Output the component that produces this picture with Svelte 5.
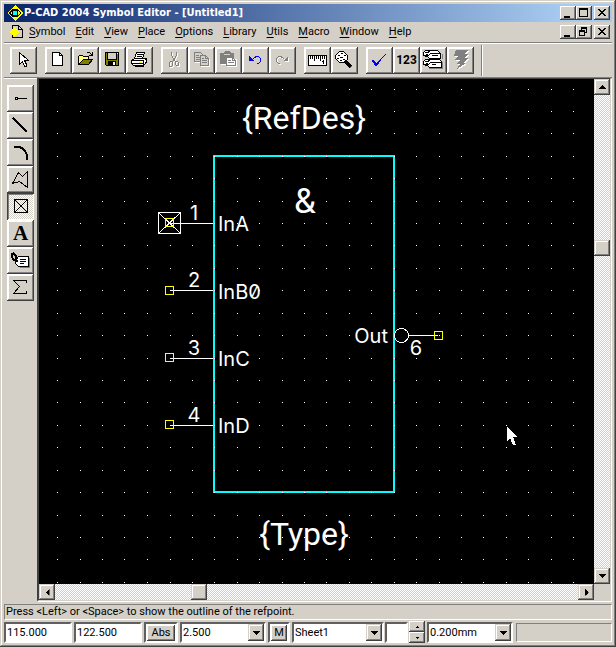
<script>
  const menus = [
    ['S', 'ymbol'], ['E', 'dit'], ['V', 'iew'], ['P', 'lace'], ['O', 'ptions'],
    ['L', 'ibrary'], ['U', 'tils'], ['M', 'acro'], ['W', 'indow'], ['H', 'elp']
  ];

  const toolGroups = [
    ['Select'],
    ['New', 'Open', 'Save', 'Print'],
    ['Cut', 'Copy', 'Paste', 'Undo', 'Redo'],
    ['Measure', 'Zoom'],
    ['Validate', 'Renumber', 'Attributes', 'Run']
  ];

  const placeTools = ['Pin', 'Line', 'Arc', 'Polygon', 'Ref point', 'Text', 'Attribute', 'Formula'];
  let activeTool = $state('Ref point');

  const gridX = [57, 80, 102, 124, 147, 170, 192, 214, 237, 259, 282, 304, 326, 349, 371, 394, 416, 439, 461, 483, 506, 528, 551, 573];
  const gridY = [89, 111, 133, 156, 178, 201, 223, 245, 268, 290, 313, 335, 358, 380, 402, 425, 447, 470, 492, 515, 537, 559, 582];
  const gridPath = gridY.map((y) => gridX.map((x) => `M${x} ${y}h1v1h-1z`).join('')).join('');

  const pins = [
    { num: '1', name: 'InA', y: 223, box: 218, base: 231, numBase: 220 },
    { num: '2', name: 'InB0', y: 290, box: 286, base: 299, numBase: 287 },
    { num: '3', name: 'InC', y: 358, box: 353, base: 366, numBase: 355 },
    { num: '4', name: 'InD', y: 425, box: 420, base: 433, numBase: 422 }
  ];

  let xPos = $state('115.000');
  let yPos = $state('122.500');
</script>

{#snippet toolIcon(name)}
  <svg class="icon" viewBox="0 0 27 27" width="27" height="27" aria-hidden="true">
    {#if name === 'Select'}
      <path d="M9.5 5.5V17.5L12.5 14.5L14.5 19.5H16.5V17.5L14.5 13.5H18.5Z" fill="#fff" stroke="#000" />
    {:else if name === 'New'}
      <path d="M7.5 5.5H14.5L17.5 8.5V18.5H7.5Z" fill="#fff" stroke="#000" />
      <path d="M14.5 5.5V8.5H17.5" fill="none" stroke="#000" />
    {:else if name === 'Open'}
      <path d="M6.5 17.5V9.5L7.5 8.5H10.5L11.5 9.5H16.5V12.5H11.5Z" fill="#ffff80" stroke="#000" />
      <path d="M6.5 17.5L11.5 12.5H20.5L16.5 17.5Z" fill="#808000" stroke="#000" />
      <path d="M14.5 6.5L15.5 5.5H17.5L20.5 8.5M20.5 5V8.5H17" fill="none" stroke="#000" />
    {:else if name === 'Save'}
      <path d="M6.5 5.5H19.5V18.5H7.5L6.5 17.5Z" fill="#808000" stroke="#000" />
      <path d="M9 6H17V12H9Z" fill="#d4d0c8" /><path d="M8.5 5V12.5H17.5V5" fill="none" stroke="#000" />
      <path d="M9 14H17V18H9Z" fill="#000" /><path d="M14 15H16V18H14Z" fill="#fff" />
      <path d="M18 6H19V7H18Z" fill="#fff" />
    {:else if name === 'Print'}
      <path d="M8.5 11.5L10.5 5.5H18.5L16.5 11.5Z" fill="#fff" stroke="#000" />
      <path d="M11 7.5H17M10.5 9.5H16" stroke="#000" />
      <path d="M5.5 13.5L8.5 11.5H19.5L20.5 12.5V15.5L17.5 18.5H7.5L5.5 16.5Z" fill="#fff" stroke="#000" />
      <path d="M6 13.5H17.5V18M18.5 13.5L20.5 11.5M6 16.5H17M18.5 16.5L20.5 14.5" fill="none" stroke="#000" />
      <path d="M13 15H16V16H13Z" fill="#ff0" />
      <path d="M8.5 18.5H17.5" stroke="#000" stroke-width="2" />
    {:else if name === 'Cut'}
      {#each ['#fff', '#808080'] as tone, i}
        <g fill="none" stroke={tone} transform={i ? '' : 'translate(1 1)'}>
          <path d="M10.5 5V8.5L14.5 15M15.5 5V8.5L11.5 15" />
          <path d="M9.5 14.5H11.5V18.5L10.5 19.5H8.5V15.5ZM14.5 14.5H16.5L17.5 15.5V18.5H15.5L14.5 17.5Z" />
        </g>
      {/each}
    {:else if name === 'Copy'}
      {#each ['#fff', '#808080'] as tone, i}
        <g fill="none" stroke={tone} transform={i ? '' : 'translate(1 1)'}>
          <path d="M6.5 5.5H12.5L14.5 7.5V14.5H6.5Z" fill="#d4d0c8" />
          <path d="M8 8.5H11M8 10.5H12M8 12.5H12" />
          <path d="M12.5 8.5H17.5L20.5 11.5V18.5H12.5Z" fill="#d4d0c8" />
          <path d="M17.5 9V11.5H20M14 11.5H16M14 13.5H19M14 15.5H19" />
        </g>
      {/each}
    {:else if name === 'Paste'}
      <path d="M6 7H19V12H22V20H12V18H6Z" fill="#fff" />
      <path d="M5 6H8L10 4H14L16 6H19V17H5Z" fill="#808080" />
      <path d="M9 7.5H15" stroke="#d4d0c8" />
      <path d="M11.5 10.5H17.5L20.5 13.5V18.5H11.5Z" fill="#fff" stroke="#808080" />
      <path d="M17.5 11V13.5H20M13 13.5H16M13 15.5H19" fill="none" stroke="#808080" />
    {:else if name === 'Undo'}
      <path d="M7 9H8V10H9V11H10V12H11V13H12V14H7Z" fill="#00f" />
      <path d="M10.5 12.5L12.5 10.5L14.5 9.5H16.5L18.5 11.5V14.5L16.5 16.5H15" fill="none" stroke="#00f" />
    {:else if name === 'Redo'}
      <g transform="translate(1 1)">
        <path d="M19 9V14H14Z" fill="#fff" /><path d="M15.5 12.5L13.5 10.5L11.5 9.5H9.5L7.5 11.5V14.5L9.5 16.5H11" fill="none" stroke="#fff" />
      </g>
      <path d="M19 9V14H14Z" fill="#808080" /><path d="M15.5 12.5L13.5 10.5L11.5 9.5H9.5L7.5 11.5V14.5L9.5 16.5H11" fill="none" stroke="#808080" />
    {:else if name === 'Measure'}
      <path d="M4.5 8.5H22.5V18.5H4.5Z" fill="#fff" stroke="#000" />
      <path d="M6.5 9V12M8.5 9V12M10.5 9V14M12.5 9V12M14.5 9V12M16.5 9V14M18.5 9V12M20.5 9V12M19.5 13V17M18 14.5H20" stroke="#000" />
    {:else if name === 'Zoom'}
      <path d="M8.5 4.5H12.5L16.5 8.5V12.5L13.5 15.5H8.5L4.5 11.5V8.5Z" fill="#fff" stroke="#000" />
      <path d="M7 8.5H9M10 6.5H12M13 8.5H15M6 11.5H8M9 10.5H12M12 12.5H14M9 13.5H11" stroke="#000" />
      <path d="M14.5 14.5L20.5 20.5" stroke="#808080" stroke-width="4" />
      <path d="M14 14L20 20" stroke="#000" stroke-width="3" />
    {:else if name === 'Validate'}
      <path d="M6 13H8V14H9V15H10V16H11V15H12V14H13V13H14V12H15V11H16V10H17V9H18V8H19V7H20V8H19V9H18V10H17V11H16V12H15V14H14V15H13V17H12V18H11V19H9V18H8V16H7V15H6Z" fill="#00f" />
    {:else if name === 'Attributes'}
      <path d="M22.5 7V11.5M22.5 15V21.5H9" fill="none" stroke="#808080" />
      <path d="M5.5 3.5H17.5L20.5 6.5V11.5H9.5L7.5 9.5L3.5 8.5V5.5Z" fill="#fff" stroke="#000" />
      <path d="M5 5.5H8L10.5 3.5M7.5 9.5L10.5 6.5H20M12 8.5H18" fill="none" stroke="#000" />
      <path d="M5.5 12.5H19.5L21.5 14.5V20.5H9.5L7.5 18.5L3.5 17.5V14.5Z" fill="#fff" stroke="#000" />
      <path d="M5 14.5H8L10.5 12.5M7.5 18.5L10.5 15.5H21M12 17.5H16" fill="none" stroke="#000" />
      <path d="M6 7H8V9H6ZM6 16H8V18H6Z" fill="#000" />
    {:else if name === 'Run'}
      <path d="M10 4H22L18 8H22L19 12H22L17 17H20L11 23L14 18H11L14 14H8L12 10H8Z" fill="#fff" />
      <path d="M9 3H21L17 7H21L18 11H21L16 16H19L10 22L13 17H10L13 13H7L11 9H7Z" fill="#808080" />
    {:else if name === 'Pin'}
      <path d="M8.5 12.5H10.5V14.5H8.5ZM11 13.5H20" fill="none" stroke="#000" />
    {:else if name === 'Line'}
      <path d="M6 6L20 20" stroke="#000" stroke-width="2" />
    {:else if name === 'Arc'}
      <path d="M7 8H11C16 8 20 13 20 18V21" fill="none" stroke="#000" stroke-width="2" />
    {:else if name === 'Polygon'}
      <path d="M5.5 17.5L11.5 6.5L15.5 10.5L20.5 5.5V21.5L12.5 15.5Z" fill="none" stroke="#000" />
    {:else if name === 'Ref point'}
      <path d="M7.5 6.5H20.5V19.5H7.5ZM7.5 6.5L20.5 19.5M20.5 6.5L7.5 19.5" fill="none" stroke="#000" />
    {:else if name === 'Attribute'}
      <path d="M11.5 9.5H21.5V19.5H11.5L8.5 16.5V13.5Z" fill="#fff" stroke="#000" />
      <path d="M22.5 11V20.5H13" fill="none" stroke="#808080" />
      <path d="M13 12.5H19M13 14.5H19M13 16.5H17M10 14.5H11" stroke="#000" />
      <path d="M10.5 14.5L6.5 12.5L4.5 9.5V7.5L6.5 6.5L8.5 8.5L9.5 13.5" fill="none" stroke="#000" stroke-width="2" />
    {:else if name === 'Formula'}
      <path d="M19.5 9V6.5H6.5L12.5 12.5L6.5 19.5H19.5V17" fill="none" stroke="#000" />
    {/if}
  </svg>
{/snippet}

{#snippet arrow(dir)}
  <svg class="arrow {dir}" width="7" height="4" viewBox="0 0 7 4" aria-hidden="true"><path d="M0 0H7V1H6V2H5V3H4V4H3V3H2V2H1V1H0Z" /></svg>
{/snippet}

{#snippet winButtons(middle)}
  <div class="win-buttons">
    <button aria-label="Minimize"><svg width="16" height="14"><path d="M4 10H10V12H4Z" /></svg></button>
    <button aria-label={middle}>
      <svg width="16" height="14">
        {#if middle === 'Maximize'}
          <path d="M3 2H12V11H3ZM4 4V10H11V4Z" fill-rule="evenodd" />
        {:else}
          <path d="M5 2H11V8H9V7H10V4H6V5H5ZM3 5H9V11H3ZM4 7V10H8V7Z" fill-rule="evenodd" />
        {/if}
      </svg>
    </button>
    <button class="close" aria-label="Close"><svg width="16" height="14"><path d="M4 3H6V4H7V5H9V4H10V3H12V4H11V5H10V6H9V7H10V8H11V9H12V10H10V9H9V8H7V9H6V10H4V9H5V8H6V7H7V6H6V5H5V4H4Z" /></svg></button>
  </div>
{/snippet}

<div class="window">
  <header class="titlebar">
    <svg class="logo" width="18" height="18" viewBox="0 0 18 18" aria-hidden="true">
      <path d="M9 1L17 9L9 17L1 9Z" fill="#ff0" />
      <path d="M3 9L6 5H12L15 9L12 13H6Z" fill="#000" />
      <path d="M4 9L7 6H11L14 9L11 12H7Z" fill="#ff0" />
      <path d="M6 6H12V12H6Z" fill="#000" /><path d="M7 7H11V11H7Z" fill="#0ff" />
    </svg>
    <h1>P-CAD 2004 Symbol Editor - [Untitled1]</h1>
    {@render winButtons('Maximize')}
  </header>

  <nav class="menubar">
    <svg class="doc" width="20" height="16" viewBox="0 0 20 16" aria-hidden="true">
      <path d="M8.5 1.5H14.5L18.5 5.5V13.5H8.5Z" fill="#d4d0c8" stroke="#000" />
      <path d="M14.5 2V5.5H18" fill="none" stroke="#000" />
      <path d="M10 3L15 8L10 13L5 8Z" fill="#ff0" />
    </svg>
    {#each menus as [key, rest]}
      <button class="menu"><u>{key}</u>{rest}</button>
    {/each}
    {@render winButtons('Restore')}
  </nav>

  <div class="toolbar">
    {#each toolGroups as group}
      <div class="group">
        {#each group as name}
          <button class="tool" aria-label={name} title={name}>
            {#if name === 'Renumber'}<b>123</b>{:else}{@render toolIcon(name)}{/if}
          </button>
        {/each}
      </div>
    {/each}
    <span class="divider"></span>
  </div>

  <main>
    <aside>
      {#each placeTools as name}
        <button class="tool" class:active={activeTool === name} aria-label={name} aria-pressed={activeTool === name} onclick={() => (activeTool = name)}>
          {#if name === 'Text'}<span class="letter">A</span>{:else}{@render toolIcon(name)}{/if}
        </button>
      {/each}
    </aside>

    <div class="stage">
      <svg class="canvas" role="img" aria-label="Symbol drawing">
        <g transform="translate(-39 -79)">
          <rect class="body" x="214" y="156" width="180" height="336" />
          <path class="grid" d={gridPath} />
          {#each pins as pin}
            <path class="wire" d="M170 {pin.y + 0.5}H213" />
            <rect class="pad" x="165.5" y={pin.box + 0.5} width="8" height="8" />
            <text class="pin" x="194" y={pin.numBase} text-anchor="middle">{pin.num}</text>
            <text class="pin" x="218" y={pin.base}>{pin.name}</text>
          {/each}
          <path class="wire" d="M158.5 212.5H180.5V233.5H158.5ZM158.5 212.5L180.5 233.5M180.5 212.5L158.5 233.5" />
          <rect class="pad" x="165.5" y="218.5" width="8" height="8" />
          <circle class="wire" cx="401.5" cy="335.5" r="7" />
          <path class="wire" d="M409 335.5H438" />
          <rect class="pad" x="434.5" y="331.5" width="8" height="8" />
          <text class="pin" x="388" y="343" text-anchor="end">Out</text>
          <text class="pin" x="416" y="355" text-anchor="middle">6</text>
          <text class="label" x="304" y="129" text-anchor="middle">{'{RefDes}'}</text>
          <text class="label gate" x="305" y="213" text-anchor="middle">&amp;</text>
          <text class="label" x="304" y="545" text-anchor="middle">{'{Type}'}</text>
          <path d="M507 427V441L510 438L513 445H516L513 437H517Z" fill="#fff" />
        </g>
      </svg>
      <div class="scroll vertical">
        <button class="cap" aria-label="Scroll up">{@render arrow('up')}</button>
        <span class="before"></span><span class="cap"></span><span class="after"></span>
        <button class="cap" aria-label="Scroll down">{@render arrow('down')}</button>
      </div>
      <div class="scroll horizontal">
        <button class="cap" aria-label="Scroll left">{@render arrow('left')}</button>
        <span class="before"></span><span class="cap"></span><span class="after"></span>
        <button class="cap" aria-label="Scroll right">{@render arrow('right')}</button>
      </div>
    </div>
  </main>

  <p class="prompt">Press &lt;Left&gt; or &lt;Space&gt; to show the outline of the refpoint.</p>

  <footer>
    <input class="field coord" aria-label="X position" bind:value={xPos} />
    <input class="field coord" aria-label="Y position" bind:value={yPos} />
    <div class="field holder wide"><button>Abs</button></div>
    <div class="field combo">
      <select aria-label="Grid spacing"><option>2.500</option></select>
      <span class="cap">{@render arrow('down')}</span>
    </div>
    <div class="field holder"><button>M</button></div>
    <div class="field combo sheet">
      <select aria-label="Sheet"><option>Sheet1</option></select>
      <span class="cap">{@render arrow('down')}</span>
    </div>
    <div class="field swatch"></div>
    <div class="spinner">
      <button aria-label="Next sheet"><svg width="3" height="2"><path d="M1 0H2V1H3V2H0V1H1Z" /></svg></button>
      <button aria-label="Previous sheet"><svg width="3" height="2"><path d="M0 0H3V1H2V2H1V1H0Z" /></svg></button>
    </div>
    <div class="field combo">
      <select aria-label="Line width"><option>0.200mm</option></select>
      <span class="cap">{@render arrow('down')}</span>
    </div>
    <div class="info"></div>
  </footer>
</div>

<style>
  :global(body) { margin: 0; background: #d4d0c8; }
  .window, .window * { box-sizing: border-box; }
  .window {
    display: flex; flex-direction: column; min-height: 100vh; padding: 4px;
    background: #d4d0c8; color: #000;
    font: 11px/14px Roboto, "Liberation Sans", sans-serif;
    box-shadow: inset -1px -1px #404040, inset 1px 1px #d4d0c8, inset -2px -2px #808080, inset 2px 2px #fff;
  }
  svg { display: block; shape-rendering: crispEdges; }
  button, input, select { font: inherit; color: inherit; margin: 0; padding: 0; border: 0; border-radius: 0; }
  button { background: #d4d0c8; }

  .titlebar { display: flex; align-items: center; height: 18px; padding: 0 2px; background: linear-gradient(90deg, #0a246a, #a6caf0 92%); }
  .logo { flex: none; }
  h1 { flex: 1; margin: 0; font: bold 11px/18px "DejaVu Sans Condensed", "DejaVu Sans", sans-serif; color: #fff; white-space: nowrap; }
  .win-buttons { display: flex; flex: none; margin-left: auto; }
  .win-buttons button { width: 16px; height: 14px; box-shadow: inset -1px -1px #404040, inset 1px 1px #fff, inset -2px -2px #808080; }
  .win-buttons .close { margin-left: 2px; }

  .menubar { display: flex; align-items: center; height: 20px; padding: 0 2px 0 0; }
  .menubar .doc { flex: none; }
  .menu { padding: 0 5px; line-height: 18px; white-space: nowrap; }
  .menu u { text-underline-offset: 2px; }

  .toolbar { display: flex; align-items: center; gap: 8px; height: 35px; padding: 2px 6px 1px; border-top: 1px solid #808080; box-shadow: inset 0 1px #fff; }
  .group { display: flex; }
  .tool {
    display: grid; place-items: center; flex: none; width: 27px; height: 27px; overflow: hidden;
    box-shadow: inset -1px -1px #404040, inset 1px 1px #fff, inset -2px -2px #808080, inset 2px 2px #fff;
  }
  .tool b { font: bold 12px/27px Roboto, sans-serif; }
  .letter { font: bold 21px/27px "Liberation Serif", serif; }
  .divider { align-self: stretch; width: 2px; margin-left: -1px; border-left: 1px solid #808080; background: #fff; }
  .active, .scroll { background: repeating-conic-gradient(#fff 0 25%, #d4d0c8 0 50%) 0 0 / 2px 2px; }
  .active { box-shadow: inset 1px 1px #404040, inset -1px -1px #fff, inset 2px 2px #808080; }

  main { display: flex; flex: 1; padding-bottom: 1px; border-top: 1px solid #808080; }
  aside { width: 33px; padding: 7px 3px 0; box-shadow: inset 0 1px #fff; }
  .stage {
    display: grid; flex: 1; grid-template: 1fr 16px / 1fr 16px; min-width: 0;
    border: solid; border-width: 1px 1px 1px 2px; border-color: #404040 #d4d0c8 #d4d0c8 #404040;
    box-shadow: 1px 1px #fff; margin-right: 1px;
  }
  .canvas { width: 100%; height: 100%; min-height: 0; background: #000; overflow: hidden; }
  .grid { fill: #fff; }
  .body { fill: none; stroke: #0ff; stroke-width: 2; }
  .wire { fill: none; stroke: #fff; }
  .pad { fill: none; stroke: #ff0; }
  text { fill: #fff; }
  .pin { font: 20px Inter, sans-serif; font-feature-settings: "zero"; }
  .label { font: 32px Roboto, sans-serif; }
  .gate { font-size: 35px; }

  .scroll { display: flex; }
  .vertical { flex-direction: column; }
  .cap {
    display: grid; place-items: center; flex: none; width: 16px; height: 16px; background: #d4d0c8;
    box-shadow: inset -1px -1px #404040, inset 1px 1px #d4d0c8, inset -2px -2px #808080, inset 2px 2px #fff;
  }
  .vertical .before { flex: 145; }
  .vertical .after { flex: 312; }
  .horizontal .before { flex: 136; }
  .horizontal .after { flex: 371; }
  .up { transform: rotate(180deg); }
  .left { transform: rotate(90deg); }
  .right { transform: rotate(-90deg); }

  .prompt { margin: 2px 0 2px; height: 16px; padding: 0 1px; border: 1px solid; border-color: #808080 #fff #fff #808080; white-space: nowrap; overflow: hidden; }
  footer { display: flex; gap: 2px; height: 21px; }
  .field { flex: none; background: #fff; border: 2px solid; border-color: #606060 #fff #fff #606060; }
  .coord { width: 68px; padding: 0 1px; }
  .holder { width: 22px; padding: 1px 1px 0; }
  .holder button { display: block; width: 100%; height: 16px; box-shadow: inset -1px -1px #404040, inset 1px 1px #fff, inset -2px -2px #808080; }
  .wide { width: 34px; }
  .combo { display: flex; width: 86px; position: relative; }
  .sheet { width: 92px; }
  select { appearance: none; width: 100%; background: transparent; padding: 0 1px; outline: 0; }
  .combo .cap { position: absolute; top: 0; right: 0; height: 17px; pointer-events: none; }
  .swatch { width: 23px; margin-left: -1px; }
  .spinner { display: flex; flex-direction: column; width: 16px; margin: -1px 0 0 -1px; }
  .spinner button { display: grid; place-items: center; height: 11px; box-shadow: inset -1px -1px #404040, inset 1px 1px #fff, inset -2px -2px #808080; }
  .info { flex: 1; margin: 1px 0 1px 1px; border: 1px solid; border-color: #808080 #fff #fff #808080; }
</style>
